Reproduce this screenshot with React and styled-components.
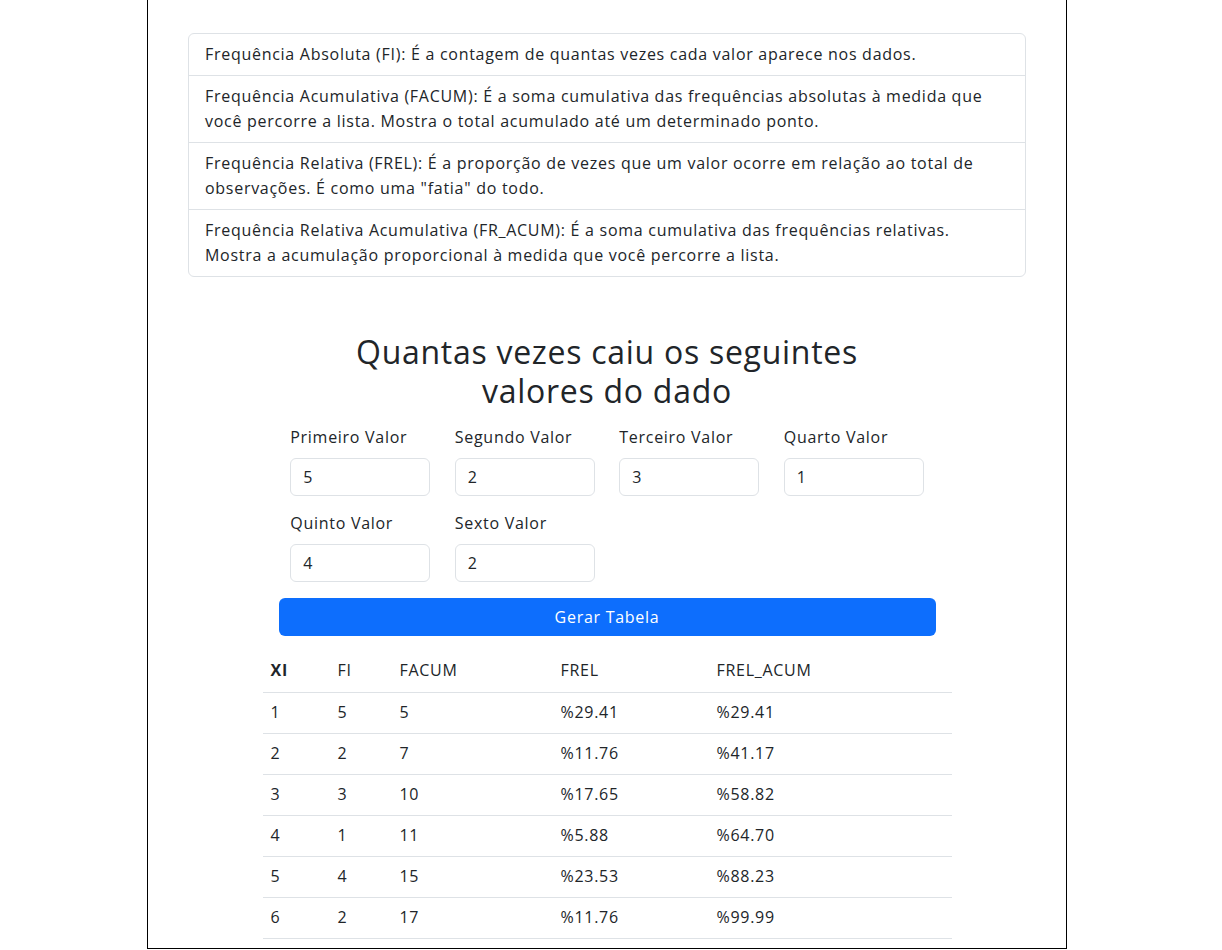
import React from 'react';
import styled, { createGlobalStyle } from 'styled-components';

const GlobalStyle = createGlobalStyle`
  body {
    margin: 0;
    font-family: 'Open Sans', 'Liberation Sans', sans-serif;
    letter-spacing: 0.045em;
    color: #212529;
    background: #fff;
  }
  * { box-sizing: border-box; }
`

const Page = styled.div`
  width: 920px;
  margin-left: 147px;
  border: 1px solid #000;
  border-top: 0;
  padding: 33px 40px 9px;
`

const ListGroup = styled.ul`
  list-style: none;
  margin: 0;
  padding: 0;
  border: 1px solid #dee2e6;
  border-radius: 6px;
`

const ListItem = styled.li`
  padding: 8px 16px;
  font-size: 16px;
  line-height: 25px;
  & + & {
    border-top: 1px solid #dee2e6;
  }
`

const Section = styled.section`
  margin-top: 55px;
  display: flex;
  flex-direction: column;
  align-items: center;
`

const Title = styled.h2`
  margin: 0 0 15px;
  max-width: 560px;
  text-align: center;
  font-size: 32px;
  line-height: 39px;
  font-weight: 400;
`

const FieldGrid = styled.div`
  display: grid;
  grid-template-columns: repeat(4, 140px);
  column-gap: 24.5px;
  row-gap: 15px;
`

const Field = styled.div`
  display: flex;
  flex-direction: column;
  gap: 9px;
`

const Label = styled.label`
  font-size: 16px;
  line-height: 24px;
`

const Input = styled.input`
  height: 38px;
  width: 100%;
  padding: 0 12px;
  border: 1px solid #dee2e6;
  border-radius: 6px;
  font: inherit;
  font-size: 16px;
  letter-spacing: inherit;
  color: #212529;
`

const Button = styled.button`
  margin-top: 16px;
  width: 657px;
  height: 38px;
  padding-bottom: 2px;
  border: 0;
  border-radius: 6px;
  background: #0d6efd;
  color: #fff;
  font: inherit;
  font-size: 16px;
  letter-spacing: inherit;
`

const Table = styled.table`
  margin-top: 15px;
  width: 689px;
  border-collapse: collapse;
  font-size: 16px;
`

const Cell = styled.td`
  padding: 0 8px 2px;
  height: 41px;
  border-bottom: 1px solid #dee2e6;
  text-align: left;
  font-weight: ${p => (p.$bold ? 700 : 400)};
  width: ${p => p.$w}px;
`

const fields = [
  ['Primeiro Valor', 5],
  ['Segundo Valor', 2],
  ['Terceiro Valor', 3],
  ['Quarto Valor', 1],
  ['Quinto Valor', 4],
  ['Sexto Valor', 2],
];

const rows = [
  [1, 5, 5, '%29.41', '%29.41'],
  [2, 2, 7, '%11.76', '%41.17'],
  [3, 3, 10, '%17.65', '%58.82'],
  [4, 1, 11, '%5.88', '%64.70'],
  [5, 4, 15, '%23.53', '%88.23'],
  [6, 2, 17, '%11.76', '%99.99'],
];

const widths = [67, 62, 161, 156, 243];

export default function App() {
  return (
    <>
      <GlobalStyle />
      <Page>
        <ListGroup>
          <ListItem>Frequência Absoluta (FI): É a contagem de quantas vezes cada valor aparece nos dados.</ListItem>
          <ListItem>Frequência Acumulativa (FACUM): É a soma cumulativa das frequências absolutas à medida que você percorre a lista. Mostra o total acumulado até um determinado ponto.</ListItem>
          <ListItem>Frequência Relativa (FREL): É a proporção de vezes que um valor ocorre em relação ao total de observações. É como uma "fatia" do todo.</ListItem>
          <ListItem>Frequência Relativa Acumulativa (FR_ACUM): É a soma cumulativa das frequências relativas. Mostra a acumulação proporcional à medida que você percorre a lista.</ListItem>
        </ListGroup>
        <Section>
          <Title>Quantas vezes caiu os seguintes valores do dado</Title>
          <FieldGrid>
            {fields.map(([label, value]) => (
              <Field key={label}>
                <Label>{label}</Label>
                <Input defaultValue={value} />
              </Field>
            ))}
          </FieldGrid>
          <Button>Gerar Tabela</Button>
          <Table>
            <thead>
              <tr>
                {['XI', 'FI', 'FACUM', 'FREL', 'FREL_ACUM'].map((h, i) => (
                  <Cell as="th" key={h} $bold={i === 0} $w={widths[i]}>{h}</Cell>
                ))}
              </tr>
            </thead>
            <tbody>
              {rows.map(r => (
                <tr key={r[0]}>
                  {r.map((v, i) => (
                    <Cell key={i} $w={widths[i]}>{v}</Cell>
                  ))}
                </tr>
              ))}
            </tbody>
          </Table>
        </Section>
      </Page>
    </>
  );
}
